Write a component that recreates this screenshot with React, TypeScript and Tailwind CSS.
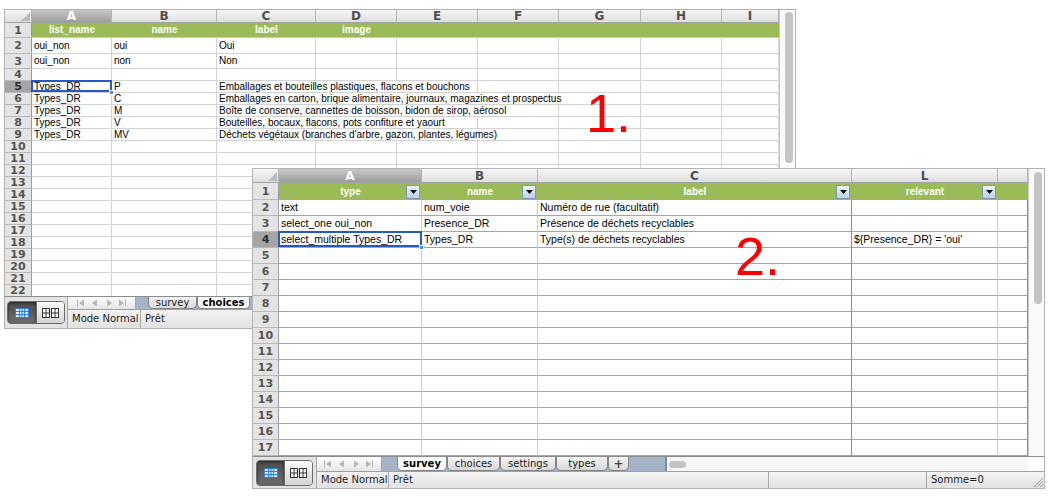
import React from "react";

type Cell = { t?: string; span?: number };
type Row = { n: number; h: string; cells?: Cell[]; sel?: boolean };
type Tab = { label: string; w: string; active?: boolean };

const SPAN: Record<number, string> = {
  1: "col-span-1",
  2: "col-span-2",
  3: "col-span-3",
  4: "col-span-4",
  5: "col-span-5",
};

const COLS1 = "grid grid-cols-[27px_80px_105px_99px_81px_81px_81px_82px_81px_57px]";
const COLS2 = "grid grid-cols-[26px_143px_116px_314px_146px_30px]";
const CELL_FONT = "font-['Liberation_Sans',Arial,sans-serif]";

function fill(cells: Cell[] = [], total: number): Cell[] {
  const used = cells.reduce((s, c) => s + (c.span ?? 1), 0);
  return [...cells, ...Array.from({ length: total - used }, () => ({}))];
}

const rows1: Row[] = [
  { n: 2, h: "h-[16px]", cells: [{ t: "oui_non" }, { t: "oui" }, { t: "Oui" }] },
  { n: 3, h: "h-[15px]", cells: [{ t: "oui_non" }, { t: "non" }, { t: "Non" }] },
  { n: 4, h: "h-[12px]" },
  {
    n: 5,
    h: "h-[12px]",
    sel: true,
    cells: [
      { t: "Types_DR" },
      { t: "P" },
      { t: "Emballages et bouteilles plastiques, flacons et bouchons", span: 3 },
    ],
  },
  {
    n: 6,
    h: "h-[12px]",
    cells: [
      { t: "Types_DR" },
      { t: "C" },
      { t: "Emballages en carton, brique alimentaire, journaux, magazines et prospectus", span: 5 },
    ],
  },
  {
    n: 7,
    h: "h-[12px]",
    cells: [
      { t: "Types_DR" },
      { t: "M" },
      { t: "Boîte de conserve, cannettes de boisson, bidon de sirop, aérosol", span: 4 },
    ],
  },
  {
    n: 8,
    h: "h-[12px]",
    cells: [
      { t: "Types_DR" },
      { t: "V" },
      { t: "Bouteilles, bocaux, flacons, pots confiture et yaourt", span: 3 },
    ],
  },
  {
    n: 9,
    h: "h-[12px]",
    cells: [
      { t: "Types_DR" },
      { t: "MV" },
      { t: "Déchets végétaux (branches d'arbre, gazon, plantes, légumes)", span: 4 },
    ],
  },
  ...Array.from({ length: 13 }, (_, i) => ({ n: 10 + i, h: "h-[12px]" })),
];

const rows2: Row[] = [
  { n: 2, h: "h-[16px]", cells: [{ t: "text" }, { t: "num_voie" }, { t: "Numéro de rue (facultatif)" }] },
  {
    n: 3,
    h: "h-[16px]",
    cells: [{ t: "select_one oui_non" }, { t: "Presence_DR" }, { t: "Présence de déchets recyclables" }],
  },
  {
    n: 4,
    h: "h-[16px]",
    sel: true,
    cells: [
      { t: "select_multiple Types_DR" },
      { t: "Types_DR" },
      { t: "Type(s) de déchets recyclables" },
      { t: "${Presence_DR} = 'oui'" },
    ],
  },
  ...Array.from({ length: 13 }, (_, i) => ({ n: 5 + i, h: "h-[16px]" })),
];

function Corner() {
  return (
    <div className="relative border-r border-b border-r-[#b5b5b5] border-b-[#a3a3a3] bg-linear-to-b from-[#f7f7f7] to-[#dedede]">
      <svg className="absolute bottom-[1px] right-[1px]" width="9" height="9" viewBox="0 0 9 9">
        <path d="M9 0v9H0z" fill="#bcbcbc" />
      </svg>
    </div>
  );
}

function ColHead({ l, sel }: { l: string; sel?: boolean }) {
  return (
    <div
      className={`flex items-center justify-center border-r border-b border-r-[#b5b5b5] border-b-[#a3a3a3] text-[12px] font-bold leading-none ${
        sel ? "bg-linear-to-b from-[#c8c8c8] to-[#9d9d9d] text-white" : "bg-linear-to-b from-[#f7f7f7] to-[#dedede] text-[#4f4f4f]"
      }`}
    >
      {l}
    </div>
  );
}

function RowHead({ n, sel }: { n: number; sel?: boolean }) {
  return (
    <div
      className={`flex items-center justify-center border-r border-b border-r-[#9d9d9d] border-b-[#b9b9b9] text-[11px] font-bold leading-none ${
        sel ? "bg-[#a5a5a5] text-[#2b2b2b]" : "bg-[#e4e4e4] text-[#555]"
      }`}
    >
      {n}
    </div>
  );
}

function Selection() {
  return (
    <>
      <div className="absolute -top-[1px] -left-[1px] -right-[1px] bottom-0 z-10 border-2 border-[#2559c4]" />
      <div className="absolute -right-[3px] -bottom-[3px] z-20 h-[5px] w-[5px] border border-white bg-[#4a8be0]" />
    </>
  );
}

function FilterBtn() {
  return (
    <div className="absolute right-[2px] top-1/2 flex h-[14px] w-[14px] -translate-y-1/2 items-center justify-center border border-[#7d9ab5] bg-linear-to-b from-[#eef4f9] to-[#bcd0e3]">
      <svg width="7" height="4" viewBox="0 0 7 4">
        <path d="M0 0h7L3.5 4z" fill="#111" />
      </svg>
    </div>
  );
}

function VScroll({ thumb }: { thumb: string }) {
  return (
    <div className="w-[16px] shrink-0 border-l border-[#c9c9c9] bg-[#fafafa] pl-[5px] pt-[2px]">
      <div className={`w-[8px] rounded-full bg-[#c4c4c4] ${thumb}`} />
    </div>
  );
}

function ViewButtons({ cls }: { cls: string }) {
  return (
    <div className={`flex overflow-hidden rounded-[4px] border border-[#6b6b6b] ${cls}`}>
      <div className="flex flex-1 items-center justify-center bg-linear-to-b from-[#4c4c4c] to-[#6c6c6c] shadow-[inset_0_1px_3px_rgba(0,0,0,0.6)]">
        <svg width="14" height="10" viewBox="0 0 14 10">
          <rect x="0.5" y="0.5" width="13" height="9" fill="#d6eaff" stroke="#2f7fe4" />
          <path d="M4.5 0.5v9M7 0.5v9M9.5 0.5v9M0.5 3.5h13M0.5 6.5h13" stroke="#2f7fe4" />
        </svg>
      </div>
      <div className="flex flex-1 items-center justify-center border-l border-[#6b6b6b] bg-linear-to-b from-[#fbfbfb] to-[#d3d3d3]">
        <svg width="17" height="10" viewBox="0 0 17 10">
          <rect x="0.5" y="0.5" width="7" height="9" fill="#fff" stroke="#333" />
          <rect x="9.5" y="0.5" width="7" height="9" fill="#fff" stroke="#333" />
          <path d="M4 0.5v9M0.5 5h7M13 0.5v9M9.5 5h7" stroke="#333" />
        </svg>
      </div>
    </div>
  );
}

function NavArrows() {
  return (
    <svg width="50" height="8" viewBox="0 0 50 8" fill="#b5b5b5">
      <rect x="0" y="0.5" width="1" height="7" />
      <path d="M2 4l5-3.5v7z" />
      <path d="M15 4l5-3.5v7z" />
      <path d="M30 0.5l5 3.5-5 3.5z" />
      <path d="M42 0.5l5 3.5-5 3.5z" />
      <rect x="48" y="0.5" width="1" height="7" />
    </svg>
  );
}

function Footer({
  leftW,
  topH,
  btnCls,
  arrowsW,
  tabsGap,
  tabs,
  plus,
  hscroll,
  status,
}: {
  leftW: string;
  topH: string;
  btnCls: string;
  arrowsW: string;
  tabsGap: string;
  tabs: Tab[];
  plus?: boolean;
  hscroll?: boolean;
  status: { t?: string; w?: string; grip?: boolean }[];
}) {
  return (
    <div className="flex h-[32px] shrink-0 border-t border-[#8c8c8c]">
      <div className={`flex shrink-0 items-center justify-center border-r border-[#a8a8a8] bg-[#e3e3e3] ${leftW}`}>
        <ViewButtons cls={btnCls} />
      </div>
      <div className="flex min-w-0 flex-1 flex-col">
        <div className={`flex shrink-0 bg-[#a5b3c6] ${topH}`}>
          <div
            className={`flex shrink-0 items-center justify-center border-r border-[#9aa5b5] bg-linear-to-b from-white to-[#e4e4e4] ${arrowsW}`}
          >
            <NavArrows />
          </div>
          <div className={`flex shrink-0 ${tabsGap}`}>
            {tabs.map((tab) => (
              <div
                key={tab.label}
                className={`flex items-center justify-center rounded-b-[5px] border border-t-0 border-[#858585] text-[10px] leading-none ${tab.w} ${
                  tab.active ? "bg-white font-bold text-black" : "bg-linear-to-b from-[#f5f5f5] to-[#d8d8d8] text-[#222]"
                }`}
              >
                {tab.label}
              </div>
            ))}
            {plus && (
              <div className="flex w-[21px] items-center justify-center rounded-b-[5px] border border-t-0 border-[#858585] bg-linear-to-b from-[#f5f5f5] to-[#d8d8d8] text-[12px] font-bold leading-none text-[#444]">
                +
              </div>
            )}
          </div>
          <div className="flex-1" />
          {hscroll && (
            <>
              <div className="flex w-[363px] items-center border-l-2 border-[#7f8a9a] bg-[#f6f6f6] pl-[2px]">
                <div className="h-[7px] w-[17px] rounded-full bg-[#c3c3c3]" />
              </div>
              <div className="w-[16px] bg-white" />
            </>
          )}
        </div>
        <div className="flex flex-1 border-t border-[#a0a0a0] bg-linear-to-b from-[#f3f3f3] to-[#e1e1e1] text-[10px] leading-none text-[#1e1e1e]">
          {status.map((s, i) => (
            <div
              key={i}
              className={`flex items-center whitespace-nowrap border-r border-[#a9a9a9] pl-[4px] ${s.w ?? "flex-1 border-r-0"}`}
            >
              {s.t}
              {s.grip && (
                <svg className="mb-[1px] mr-[1px] ml-auto self-end" width="10" height="10" viewBox="0 0 10 10">
                  <path d="M10 1L1 10M10 4L4 10M10 7L7 10" stroke="#9a9a9a" />
                </svg>
              )}
            </div>
          ))}
        </div>
      </div>
    </div>
  );
}

function Choices() {
  const letters = ["A", "B", "C", "D", "E", "F", "G", "H", "I"];
  const heads = ["list_name", "name", "label", "image", "", "", "", "", ""];
  return (
    <div className="absolute left-[4px] top-[9px] flex h-[320px] w-[792px] flex-col border border-[#b2b2b2] bg-white">
      <div className="flex min-h-0 flex-1">
        <div className="min-w-0 flex-1 overflow-hidden">
          <div className={`${COLS1} h-[13px]`}>
            <Corner />
            {letters.map((l) => (
              <ColHead key={l} l={l} sel={l === "A"} />
            ))}
          </div>
          <div className={`${COLS1} h-[15px]`}>
            <RowHead n={1} />
            {heads.map((h, i) => (
              <div
                key={i}
                className={`flex items-center justify-center border-b border-[#c9c9c9] bg-[#9bbb59] text-[10px] font-bold leading-none text-white ${CELL_FONT}`}
              >
                {h}
              </div>
            ))}
          </div>
          {rows1.map((r) => (
            <div key={r.n} className={`${COLS1} ${r.h}`}>
              <RowHead n={r.n} sel={r.sel} />
              {fill(r.cells, 9).map((c, i) => (
                <div
                  key={i}
                  className={`relative flex items-center whitespace-nowrap border-r border-b border-[#d3d3d3] pl-[2px] text-[10px] leading-none text-black ${CELL_FONT} ${
                    SPAN[c.span ?? 1]
                  }`}
                >
                  {c.t}
                  {r.sel && i === 0 && <Selection />}
                </div>
              ))}
            </div>
          ))}
        </div>
        <VScroll thumb="h-[151px]" />
      </div>
      <Footer
        leftW="w-[63px]"
        topH="h-[12px]"
        btnCls="h-[23px] w-[58px]"
        arrowsW="w-[68px]"
        tabsGap="ml-[12px]"
        tabs={[
          { label: "survey", w: "w-[49px]" },
          { label: "choices", w: "w-[53px]", active: true },
        ]}
        status={[{ t: "Mode Normal", w: "w-[73px]" }, { t: "Prêt" }]}
      />
    </div>
  );
}

function Survey() {
  const letters = ["A", "B", "C", "L", ""];
  const heads = ["type", "name", "label", "relevant", ""];
  return (
    <div className="absolute left-[252px] top-[168px] flex h-[321px] w-[793px] flex-col border border-[#b2b2b2] bg-white">
      <div className="flex min-h-0 flex-1">
        <div className="min-w-0 flex-1 overflow-hidden">
          <div className={`${COLS2} h-[14px]`}>
            <Corner />
            {letters.map((l, i) => (
              <ColHead key={i} l={l} sel={l === "A"} />
            ))}
          </div>
          <div className={`${COLS2} h-[17px]`}>
            <RowHead n={1} />
            {heads.map((h, i) => (
              <div
                key={i}
                className={`relative flex items-center justify-center bg-[#9bbb59] text-[10px] font-bold leading-none text-white ${CELL_FONT}`}
              >
                {h}
                {i < 4 && <FilterBtn />}
              </div>
            ))}
          </div>
          {rows2.map((r) => (
            <div key={r.n} className={`${COLS2} ${r.h}`}>
              <RowHead n={r.n} sel={r.sel} />
              {fill(r.cells, 5).map((c, i) => (
                <div
                  key={i}
                  className={`relative flex items-center whitespace-nowrap border-r border-b border-b-[#9bbb59] pl-[2px] text-[10.5px] leading-none text-black ${CELL_FONT} ${
                    i === 2 || i === 4 ? "border-r-[#8c8c8c]" : "border-r-[#cdcdcd]"
                  }`}
                >
                  {c.t}
                  {r.sel && i === 0 && <Selection />}
                </div>
              ))}
            </div>
          ))}
        </div>
        <VScroll thumb="mt-[1px] h-[132px]" />
      </div>
      <Footer
        leftW="w-[64px]"
        topH="h-[14px]"
        btnCls="h-[26px] w-[57px]"
        arrowsW="w-[65px]"
        tabsGap="ml-[15px]"
        tabs={[
          { label: "survey", w: "w-[50px]", active: true },
          { label: "choices", w: "w-[53px]" },
          { label: "settings", w: "w-[56px]" },
          { label: "types", w: "w-[52px]" },
        ]}
        plus
        hscroll
        status={[
          { t: "Mode Normal", w: "w-[72px]" },
          { t: "Prêt", w: "w-[380px]" },
          { w: "w-[158px]" },
          { t: "Somme=0", grip: true },
        ]}
      />
    </div>
  );
}

export default function App() {
  return (
    <div className="relative h-[496px] w-[1051px] overflow-hidden bg-white font-['DejaVu_Sans',sans-serif]">
      <Choices />
      <span className="absolute left-[586px] top-[86px] font-['Liberation_Sans',Arial,sans-serif] text-[54px] leading-none text-[#ff0000]">
        1.
      </span>
      <Survey />
      <span className="absolute left-[735px] top-[229px] font-['Liberation_Sans',Arial,sans-serif] text-[54px] leading-none text-[#ff0000]">
        2.
      </span>
    </div>
  );
}
